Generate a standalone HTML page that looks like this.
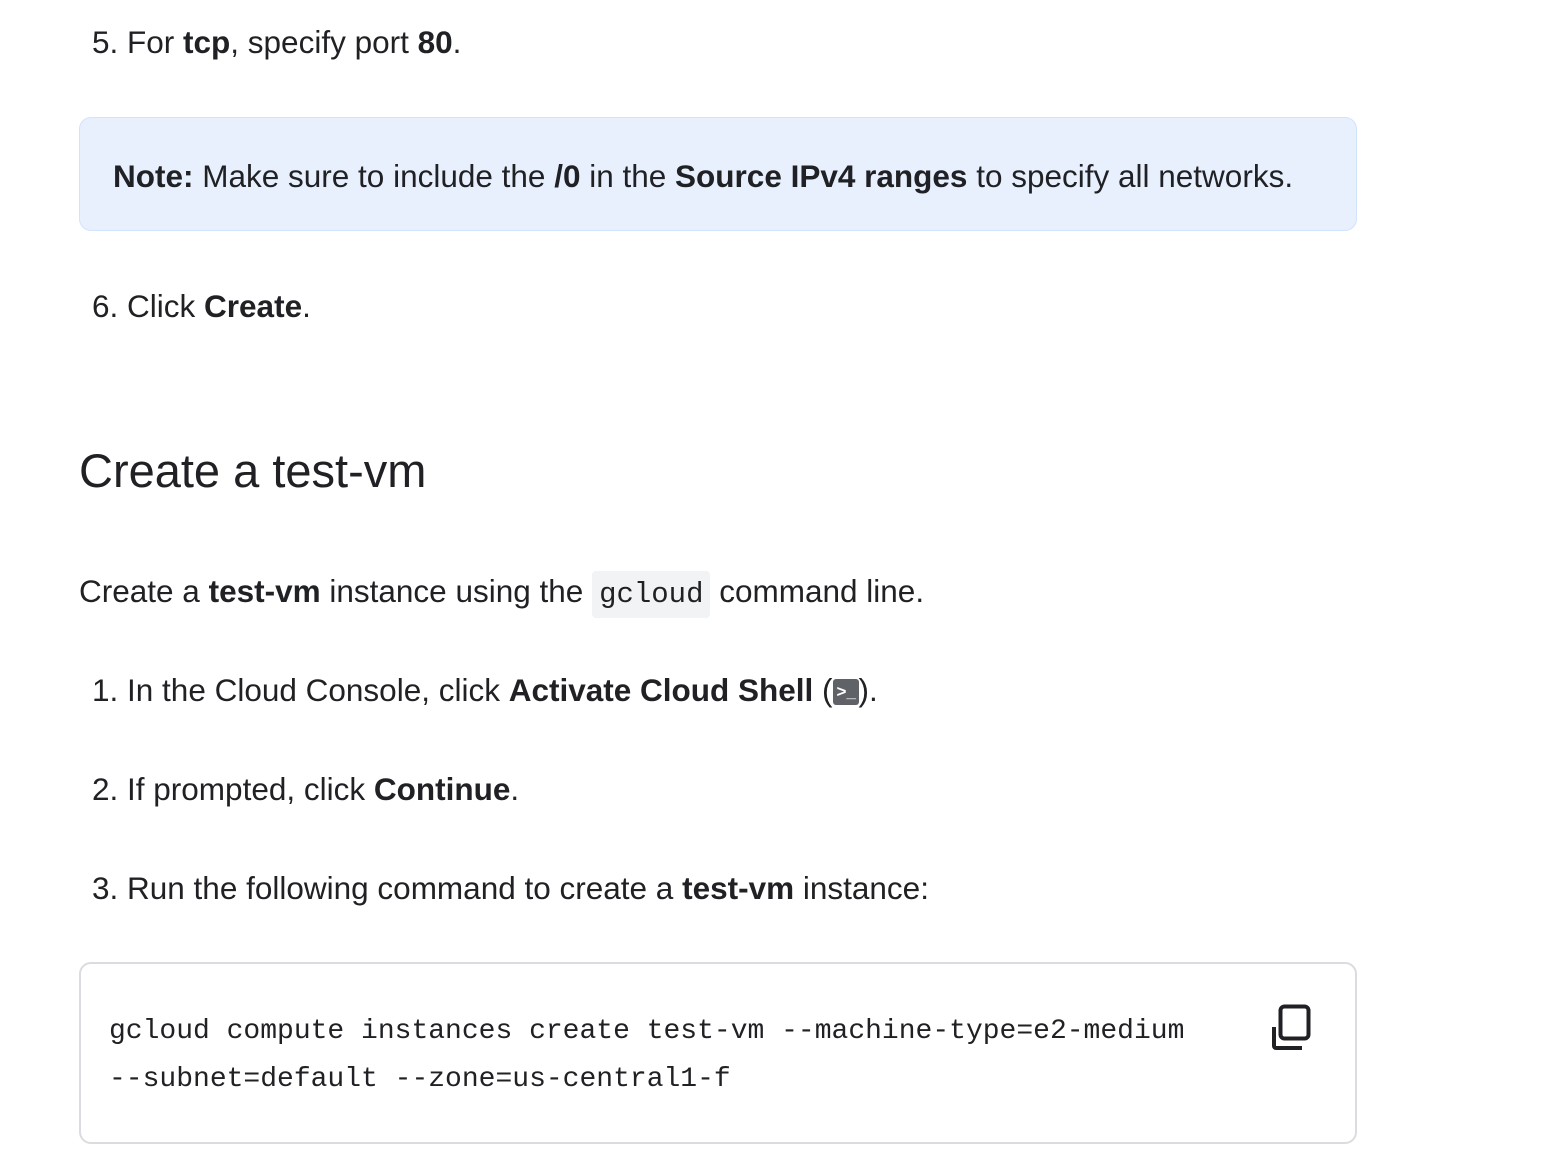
<!DOCTYPE html>
<html><head><meta charset="utf-8"><style>
body{margin:0;width:1544px;height:1156px;background:#fff;position:relative;overflow:hidden;font-family:"Liberation Sans",Arial,sans-serif;color:#202124}
.t{position:absolute;font-size:31.5px;line-height:40px;white-space:nowrap}
b{font-weight:bold}
.note{position:absolute;left:79px;top:117px;width:1278px;height:114px;background:#e8f0fe;border:1px solid #d2e3fc;border-radius:12px;box-sizing:border-box}
.code{position:absolute;left:79px;top:962px;width:1278px;height:182px;border:2px solid #dadce0;border-radius:12px;box-sizing:border-box}
.m{position:absolute;font-family:"Liberation Mono",monospace;font-size:28px;line-height:48px;white-space:pre;color:#202124}
.ic{display:inline-block;background:#f1f3f4;font-family:"Liberation Mono",monospace;font-size:29px;padding:0 7px;border-radius:4px;line-height:47px}
</style></head><body>
<div class="t" style="left:92px;top:22px">5. For <b>tcp</b>, specify port <b>80</b>.</div>
<div class="note"></div>
<div class="t" style="left:113px;top:156px">
<b>Note:</b> Make sure to include the <b>/0</b> in the <b>Source IPv4 ranges</b> to specify all networks.</div>
<div class="t" style="left:92px;top:286px">6. Click <b>Create</b>.</div>
<div class="t" style="left:79px;top:443px;font-size:47px;line-height:56px">Create a test-vm</div>
<div class="t" style="left:79px;top:571px">Create a <b>test-vm</b> instance using the <span class="ic">gcloud</span> command line.</div>
<div class="t" style="left:92px;top:670px">1. In the Cloud Console, click <b>Activate Cloud Shell</b> (<span style="display:inline-block;width:26px;height:26px;background:#5f6368;border-radius:3px;vertical-align:-4px;position:relative"><span style="position:absolute;left:4px;top:0;color:#fff;font-size:17px;font-weight:bold;line-height:26px">&gt;_</span></span>).</div>
<div class="t" style="left:92px;top:769px">2. If prompted, click <b>Continue</b>.</div>
<div class="t" style="left:92px;top:868px">3. Run the following command to create a <b>test-vm</b> instance:</div>
<div class="code"></div>
<div class="m" style="left:109px;top:1008px">gcloud compute instances create test-vm --machine-type=e2-medium</div>
<div class="m" style="left:109px;top:1056px">--subnet=default --zone=us-central1-f</div>
<svg style="position:absolute;left:1270px;top:1003px" width="42" height="48" viewBox="0 0 42 48">
<rect x="10.5" y="3.5" width="28" height="32" rx="4" fill="none" stroke="#202124" stroke-width="4"/>
<path d="M4 24 V43 a2 2 0 0 0 2 2 H32" fill="none" stroke="#202124" stroke-width="4"/>
</svg>
</body></html>
